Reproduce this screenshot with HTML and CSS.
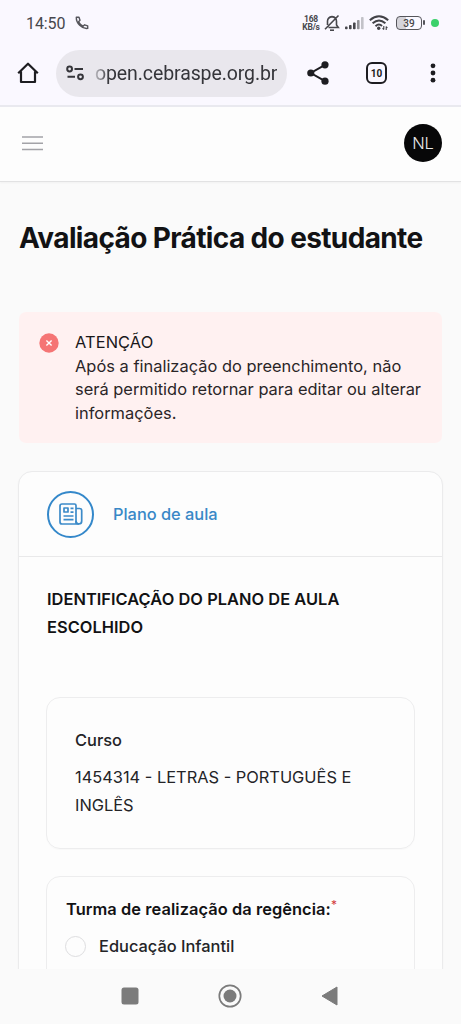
FILE: index.html
```html
<!DOCTYPE html>
<html lang="pt-BR">
<head>
<meta charset="utf-8">
<meta name="viewport" content="width=device-width, initial-scale=1">
<title>Avaliação Prática do estudante</title>
<link rel="stylesheet" href="styles.css">
</head>
<body>
<div class="phone">
  <div class="chrome">
    <div class="status">
      <span class="clock">14:50</span>
      <svg class="call" width="14" height="14" viewBox="0 0 14 14" fill="none" stroke="#55555b" stroke-width="1.4" stroke-linejoin="round"><path d="M1.3 1.2H4L5 4.3 3.6 5.8Q5.2 8.9 8.1 10.2L9.6 8.8 12.7 9.8V12.4Q8.3 13 4.7 9.3 1.1 5.6 1.3 1.2Z"/></svg>
      <span class="speed"><span>168</span><span>KB/s</span></span>
      <svg class="bell" width="16" height="18" viewBox="0 0 16 18" fill="none" stroke="#47474c" stroke-width="1.6"><path d="M3.5 11V7Q3.7 3.2 8 2.6 12.5 3.2 12.5 7.5V11L14.3 13.5H4.5M14.5 1.5 1 15.2"/><path d="M6 16.2H10"/></svg>
      <svg class="signal" width="19" height="13" viewBox="0 0 19 13"><g fill="#47474c"><rect x="0" y="9.6" width="2.6" height="2.6" rx=".8"/><rect x="4" y="8" width="2.6" height="4.2" rx=".8"/><rect x="8" y="5.5" width="2.6" height="6.7" rx=".8"/></g><rect x="12" y="3" width="2.6" height="9.2" rx=".8" fill="#929297"/><rect x="16" y="0" width="2.6" height="12.2" rx=".8" fill="#c2c2c8"/></svg>
      <svg class="wifi" width="20" height="16" viewBox="0 0 20 16" fill="none" stroke="#424247" stroke-width="2"><path d="M.8 5.2Q10-2.6 19.2 5.2M3.6 8.3Q10 2.7 16.4 8.3M6.5 11.2Q10 8 13 11"/><circle cx="9.7" cy="13.2" r="1.7" fill="#424247" stroke="none"/><path stroke-width="1.1" d="M14.8 11V14.5M13.6 13.2 14.8 14.7M17.2 15V11.6M18.4 13 17.2 11.5"/></svg>
      <span class="battery">39</span>
      <span class="live"></span>
    </div>
    <div class="toolbar">
      <svg class="home" width="22" height="22" viewBox="0 0 22 22" fill="none" stroke="#1d1d21" stroke-width="2.2" stroke-linejoin="round"><path d="M4 9.5V20H18V9.5M1.2 11.3 11 1.7 20.8 11.3" /></svg>
      <div class="url">
        <svg width="19" height="16" viewBox="0 0 19 16" fill="none" stroke="#35353a" stroke-width="2"><circle cx="3.6" cy="4" r="2.4"/><path d="M8.5 4H17M1.5 11.8H9"/><circle cx="14.5" cy="11.8" r="2.4"/></svg>
        <span class="address">open.cebraspe.org.br</span>
      </div>
      <svg class="share" width="22" height="24" viewBox="0 0 22 24" fill="#1d1d21"><path d="M18 3.8 3.8 12 18 20.2" fill="none" stroke="#1d1d21" stroke-width="2"/><circle cx="18" cy="3.8" r="3.6"/><circle cx="3.8" cy="12" r="3.6"/><circle cx="18" cy="20.2" r="3.6"/></svg>
      <span class="tabs">10</span>
      <svg class="more" width="6" height="20" viewBox="0 0 6 20" fill="#1d1d21"><circle cx="3" cy="2.8" r="2.4"/><circle cx="3" cy="10" r="2.4"/><circle cx="3" cy="17.2" r="2.4"/></svg>
    </div>
  </div>

  <header class="site-header">
    <svg width="21" height="16" viewBox="0 0 21 16" stroke="#a3a3a8" stroke-width="1.6"><path d="M0 2H21M0 8.3H21M0 14.5H21"/></svg>
    <span class="avatar">NL</span>
  </header>

  <main class="page">
    <h1 class="title">Avaliação Prática do estudante</h1>
    <section class="alert">
      <svg width="20" height="20" viewBox="0 0 20 20"><circle cx="10" cy="10" r="9.7" fill="#f57575"/><path d="M7.4 7.4 12.6 12.6M12.6 7.4 7.4 12.6" stroke="#fff" stroke-width="1.4"/></svg>
      <div class="alert-text"><div class="alert-title">ATENÇÃO</div><div>Após a finalização do preenchimento, não<br>será permitido retornar para editar ou alterar<br>informações.</div></div>
    </section>

    <section class="card">
      <div class="step">
        <span class="step-icon"><svg width="24" height="22" viewBox="0 0 24 22" fill="none" stroke="#3c8bc9" stroke-width="1.7" stroke-linejoin="round"><path d="M3 1H15.5Q17 1 17 2.5V18.5Q17 21 19.3 21H3Q1 21 1 19V3Q1 1 3 1Z"/><path d="M17 5.5H20.5Q22.7 5.5 22.7 7.5V18Q22.7 21 19.8 21 17 21 17 18"/><rect x="5" y="5" width="4" height="4"/><path d="M11.5 5.3H14.5M11.5 9.2H14.5M4.5 13H14.5M4.5 16.7H14.5"/></svg></span>
        <span class="step-name">Plano de aula</span>
      </div>
      <div class="card-body">
        <h2 class="heading">IDENTIFICAÇÃO DO PLANO DE AULA<br>ESCOLHIDO</h2>
        <div class="box course">
          <div class="label">Curso</div>
          <div class="value">1454314 - LETRAS - PORTUGUÊS E<br>INGLÊS</div>
        </div>
        <div class="box question">
          <div class="legend"><span class="legend-text">Turma de realização da regência:</span><span class="required">*</span></div>
          <label class="option"><span class="radio"></span><span class="option-text">Educação Infantil</span></label>
        </div>
      </div>
    </section>
  </main>

  <nav class="navbar">
    <svg width="18" height="18" viewBox="0 0 18 18"><rect x=".5" y=".5" width="17" height="17" rx="2.5" fill="#7b7b7b"/></svg>
    <svg width="24" height="24" viewBox="0 0 24 24"><circle cx="12" cy="12" r="10.7" fill="none" stroke="#7b7b7b" stroke-width="1.7"/><circle cx="12" cy="12" r="6.5" fill="#7b7b7b"/></svg>
    <svg width="17" height="20" viewBox="0 0 17 20"><path d="M16 1V19L1 10Z" fill="#7b7b7b" stroke="#7b7b7b" stroke-linejoin="round"/></svg>
  </nav>
</div>
</body>
</html>
```
FILE: styles.css
```css
* { box-sizing: border-box; }
body { margin: 0; background: #fafafa; font-family: Inter, "Liberation Sans", sans-serif; color: #121214; }
svg { display: block; flex: none; }
.phone { width: 461px; height: 1024px; display: flex; flex-direction: column; overflow: hidden; }

.chrome { flex: none; height: 107px; background: #faf8ff; border-bottom: 2px solid #e9e9ef; font-family: Roboto, sans-serif; }
.status { height: 46px; display: flex; align-items: center; padding: 0 22px 0 26px; }
.clock { width: 40px; padding-top: 2px; font-size: 16px; line-height: 20px; letter-spacing: -.1px; color: #47474c; white-space: nowrap; }
.call { margin: 0 auto 0 9px; }
.speed { display: flex; flex-direction: column; align-items: center; width: 18px; font-size: 8.5px; line-height: 8px; font-weight: 700; letter-spacing: -.2px; color: #47474c; }
.bell { margin-left: 4px; }
.signal { margin-left: 5px; }
.wifi { margin-left: 5px; }
.battery { position: relative; margin-left: 7px; width: 26px; height: 14px; border: 1.5px solid #55555b; border-radius: 4px; background: linear-gradient(90deg, #d5d4da 9px, transparent 9px); font-size: 10px; line-height: 13px; font-weight: 500; color: #47474c; text-align: center; }
.battery::after { content: ""; position: absolute; right: -4px; top: 3px; width: 2px; height: 5px; border-radius: 1px; background: #55555b; }
.live { width: 8px; height: 8px; margin-left: 9px; border-radius: 50%; background: #3bd16b; }
.toolbar { height: 54px; display: flex; align-items: center; padding-left: 17px; }
.url { display: flex; align-items: center; width: 231px; height: 47px; margin-left: 17px; padding-left: 10px; border-radius: 24px; background: #e9e7ed; }
.address { margin-left: 10px; padding-top: 1px; font-size: 19.5px; line-height: 24px; letter-spacing: -.1px; color: #35353a; white-space: nowrap; -webkit-mask-image: linear-gradient(90deg, rgba(0,0,0,.25), #000 14px); mask-image: linear-gradient(90deg, rgba(0,0,0,.25), #000 14px); }
.share { margin-left: 20px; }
.tabs { width: 21px; height: 22px; margin-left: 37px; border: 2.2px solid #1d1d21; border-radius: 6px; font-size: 10px; line-height: 19px; font-weight: 700; text-align: center; color: #1d1d21; }
.more { margin-left: 43px; }

.site-header { flex: none; height: 75px; display: flex; align-items: center; justify-content: space-between; padding: 0 19px 2px 22px; background: #fdfdfd; border-bottom: 1px solid #e2e2e3; box-shadow: 0 1px 2px rgba(0,0,0,.04); }
.avatar { width: 38px; height: 38px; border-radius: 50%; background: #070708; color: #e8e8ea; font-size: 16.4px; line-height: 39px; font-weight: 300; text-align: center; }

.page { flex: 1; min-height: 0; overflow: hidden; padding: 38px 18px 0; }
.title { margin: 0 0 0 1px; font-size: 28px; line-height: 36px; font-weight: 650; letter-spacing: -.63px; white-space: nowrap; }
.alert { display: flex; height: 131px; margin: 56px 1px 0; padding: 19px 0 0 20px; border-radius: 7px; background: #fff1f1; font-size: 16.4px; line-height: 23.5px; color: #2a2527; }
.alert svg { margin-top: 2px; }
.alert-text { margin-left: 16px; white-space: nowrap; letter-spacing: .02px; }
.alert-title { color: #19181a; letter-spacing: .1px; }
.card { height: 700px; margin-top: 28px; border: 1px solid #ebebec; border-radius: 14px; background: #fdfdfd; box-shadow: 0 1px 2px rgba(0,0,0,.04); }
.step { height: 85px; display: flex; align-items: center; padding-left: 28px; border-bottom: 1px solid #e9e9ea; }
.step-icon { display: flex; align-items: center; justify-content: center; width: 47px; height: 47px; border: 2px solid #3488ca; border-radius: 50%; }
.step-name { margin-left: 19px; font-size: 16.4px; line-height: 24px; font-weight: 500; letter-spacing: -.02px; color: #3988c7; }
.card-body { padding: 28px 27px 0; }
.heading { margin: 0 0 0 1px; font-size: 16.4px; line-height: 28px; font-weight: 600; letter-spacing: .04px; white-space: nowrap; }
.box { border: 1px solid #ededee; border-radius: 14px; box-shadow: 0 1px 1px rgba(0,0,0,.02); }
.course { height: 152px; margin-top: 56px; padding: 28px; font-size: 16.4px; line-height: 28px; }
.label { font-weight: 500; margin-bottom: 9px; color: #242427; }
.value { color: #242427; white-space: nowrap; }
.question { height: 200px; margin-top: 27px; padding: 18px; }
.legend { display: flex; padding-left: 1px; font-size: 16.4px; line-height: 28px; font-weight: 600; letter-spacing: .07px; white-space: nowrap; }
.required { margin-left: 0; font-size: 12px; line-height: 20px; font-weight: 400; color: #d33b3b; }
.option { display: flex; align-items: center; margin-top: 9px; height: 28px; }
.radio { width: 21px; height: 21px; border: 1px solid #dedee0; border-radius: 50%; }
.option-text { margin-left: 13px; font-size: 16.4px; font-weight: 500; color: #242427; white-space: nowrap; }

.navbar { flex: none; height: 55px; display: flex; align-items: center; background: #fafafa; padding: 0 0 1px 121px; }
.navbar svg + svg { margin-left: 79px; }
```
